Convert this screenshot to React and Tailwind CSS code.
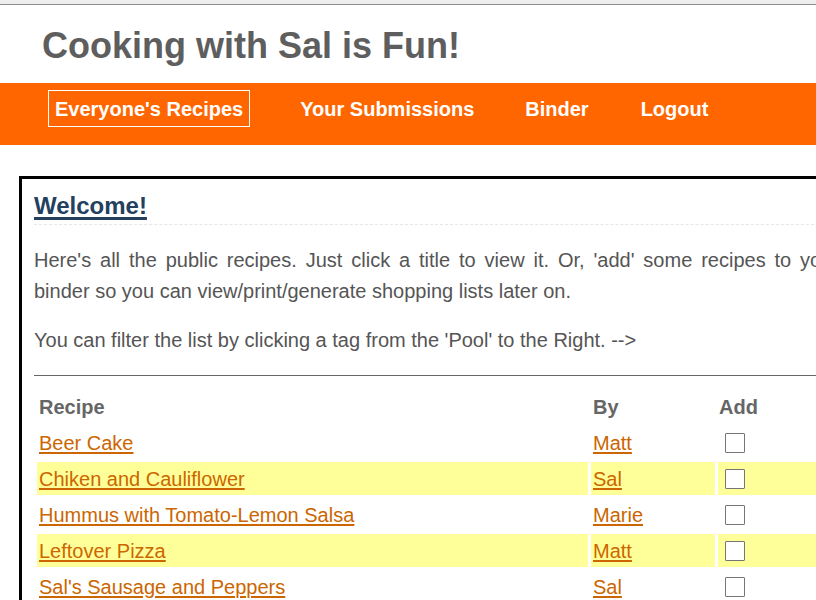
import React from "react";

const recipes = [
  { title: "Beer Cake", by: "Matt" },
  { title: "Chiken and Cauliflower", by: "Sal" },
  { title: "Hummus with Tomato-Lemon Salsa", by: "Marie" },
  { title: "Leftover Pizza", by: "Matt" },
  { title: "Sal's Sausage and Peppers", by: "Sal" },
  { title: "Spinach Dip", by: "Marie" },
];

export default function App() {
  return (
    <div className="w-[816px] h-[600px] overflow-hidden bg-white font-['Liberation_Sans',Arial,sans-serif] text-[#555555]">
      <div className="h-[5px] bg-[#eeeeee] border-b border-[#8c8c8c]" />
      <div className="h-[78px] pl-[42px] pt-[21px]">
        <h1 className="text-[36px] leading-[40px] font-bold text-[#5e5e5e]">Cooking with Sal is Fun!</h1>
      </div>
      <nav className="h-[62px] bg-[#ff6600] flex items-start pt-[7px] pl-[48px] text-white font-bold text-[20px]">
        <a className="border border-white px-[6px] h-[37px] flex items-center">Everyone's Recipes</a>
        <a className="ml-[43px] border border-transparent px-[6px] h-[37px] flex items-center">Your Submissions</a>
        <a className="ml-[37px] border border-transparent px-[6px] h-[37px] flex items-center">Binder</a>
        <a className="ml-[38px] border border-transparent px-[6px] h-[37px] flex items-center">Logout</a>
      </nav>
      <div className="pt-[31px] pl-[19px]">
        <div className="w-[823px] border-[3px] border-black pl-[12px] pt-[11px]">
          <h2 className="text-[24px] leading-[32px] font-bold text-[#24405f] underline underline-offset-[3px] decoration-[3px] pb-[2px] border-b border-dashed border-[#e6e6e6]">
            Welcome!
          </h2>
          <p className="mt-[20px] text-[20px] leading-[31px] text-justify">
            Here's all the public recipes. Just click a title to view it. Or, 'add' some recipes to your binder so you can view/print/generate shopping lists later on.
          </p>
          <p className="mt-[18px] text-[20px] leading-[31px]">
            You can filter the list by clicking a tag from the 'Pool' to the Right. --&gt;
          </p>
          <hr className="mt-[19px] border-t border-[#666666]" />
          <table className="mt-[11px] border-separate border-spacing-[3px] text-[20px]">
            <thead>
              <tr className="h-[33px]">
                <th className="w-[551px] text-left px-[2px] font-bold text-[#666666]">Recipe</th>
                <th className="w-[124px] text-left px-[2px] font-bold text-[#666666]">By</th>
                <th className="w-[110px] text-left px-[1px] font-bold text-[#666666]">Add</th>
              </tr>
            </thead>
            <tbody>
              {recipes.map((r, i) => (
                <tr key={r.title} className={"h-[33px] " + (i % 2 === 1 ? "bg-[#ffff99]" : "")}>
                  <td className="px-[2px]">
                    <a className="text-[#cc6600] underline underline-offset-[2px]">{r.title}</a>
                  </td>
                  <td className="px-[2px]">
                    <a className="text-[#cc6600] underline underline-offset-[2px]">{r.by}</a>
                  </td>
                  <td className="pl-[7px]">
                    <span className="block w-[20px] h-[20px] border border-[#767676] bg-white rounded-[1px]" />
                  </td>
                </tr>
              ))}
            </tbody>
          </table>
        </div>
      </div>
    </div>
  );
}
